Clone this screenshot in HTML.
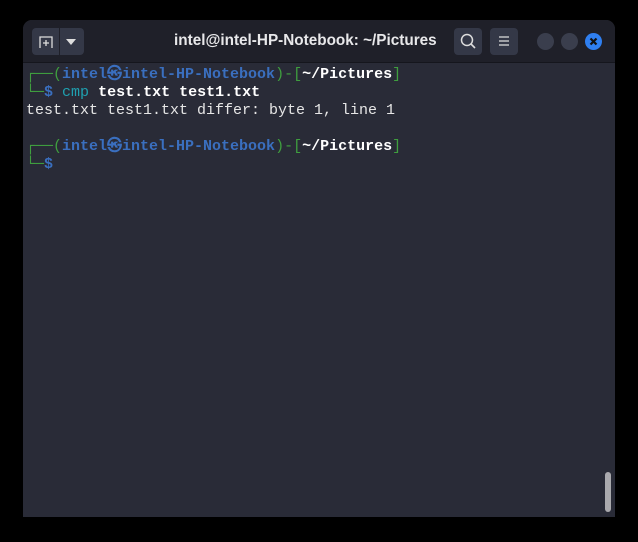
<!DOCTYPE html>
<html><head><meta charset="utf-8"><style>
body{margin:0;width:638px;height:542px;background:#000;overflow:hidden;position:relative;font-family:"Liberation Sans",sans-serif}
.win{position:absolute;left:23px;top:20px;width:592px;height:497px;background:#292b37;border-radius:9px 9px 0 0;overflow:hidden}
.tb{position:absolute;left:0;top:0;width:592px;height:42px;background:#1f2029;border-bottom:1px solid #15161d}
.btn{position:absolute;top:8px;height:27px;background:#343847;border-radius:4px}
.title{position:absolute;left:151px;width:261px;top:12px;text-align:center;color:#e8e8ea;font-weight:bold;font-size:15.3px;white-space:nowrap}
.c{position:absolute;top:13px;width:17px;height:17px;border-radius:50%;background:#3a3e4d}
.term{position:absolute;left:3px;top:46px;font-family:"Liberation Mono","DejaVu Sans Mono",monospace;font-size:15px;line-height:18px;color:#e6e6e6;white-space:pre}
.g{color:#3f9e3f}.b{color:#3a6fbf;font-weight:bold}.w{color:#fff;font-weight:bold}.t{color:#1fa0b0}
.sb{position:absolute;left:582px;top:452px;width:6px;height:40px;background:#a9a9ad;border-radius:3px}
</style></head><body>
<div class="win">
<div class="tb">
<div class="btn" style="left:9px;width:52px"></div>
<div style="position:absolute;left:36px;top:8px;width:1px;height:27px;background:#1f2029"></div>
<svg style="position:absolute;left:15px;top:14px" width="16" height="16"><path d="M2 14V3h12v11M8 6v6M5 9h6" stroke="#ddd" stroke-width="1.3" fill="none"/></svg>
<svg style="position:absolute;left:43px;top:19px" width="10" height="6"><path d="M0 0h10L5 6z" fill="#ddd"/></svg>
<div class="title">intel@intel-HP-Notebook: ~/Pictures</div>
<div class="btn" style="left:431px;width:28px"></div>
<svg style="position:absolute;left:437px;top:13px" width="17" height="17"><circle cx="7" cy="7" r="5.5" stroke="#ddd" stroke-width="1.5" fill="none"/><path d="M11 11l4 4" stroke="#ddd" stroke-width="1.6"/></svg>
<div class="btn" style="left:467px;width:28px"></div>
<svg style="position:absolute;left:475px;top:15px" width="12" height="12"><path d="M1 2h10M1 6h10M1 10h10" stroke="#ddd" stroke-width="1.2"/></svg>
<div class="c" style="left:514px"></div>
<div class="c" style="left:538px"></div>
<div class="c" style="left:562px;background:#2f7ff0"></div>
<svg style="position:absolute;left:565px;top:16px" width="11" height="11"><path d="M2.5 2.5l6 6M8.5 2.5l-6 6" stroke="#111" stroke-width="2.2"/></svg>
</div>
<div class="term"><span class="g">┌──(</span><span class="b">intel㉿intel-HP-Notebook</span><span class="g">)-[</span><span class="w">~/Pictures</span><span class="g">]</span>
<span class="g">└─</span><span class="b">$</span> <span class="t">cmp</span> <span class="w">test.txt test1.txt</span>
test.txt test1.txt differ: byte 1, line 1

<span class="g">┌──(</span><span class="b">intel㉿intel-HP-Notebook</span><span class="g">)-[</span><span class="w">~/Pictures</span><span class="g">]</span>
<span class="g">└─</span><span class="b">$</span></div>
<div class="sb"></div>
</div>
</body></html>
